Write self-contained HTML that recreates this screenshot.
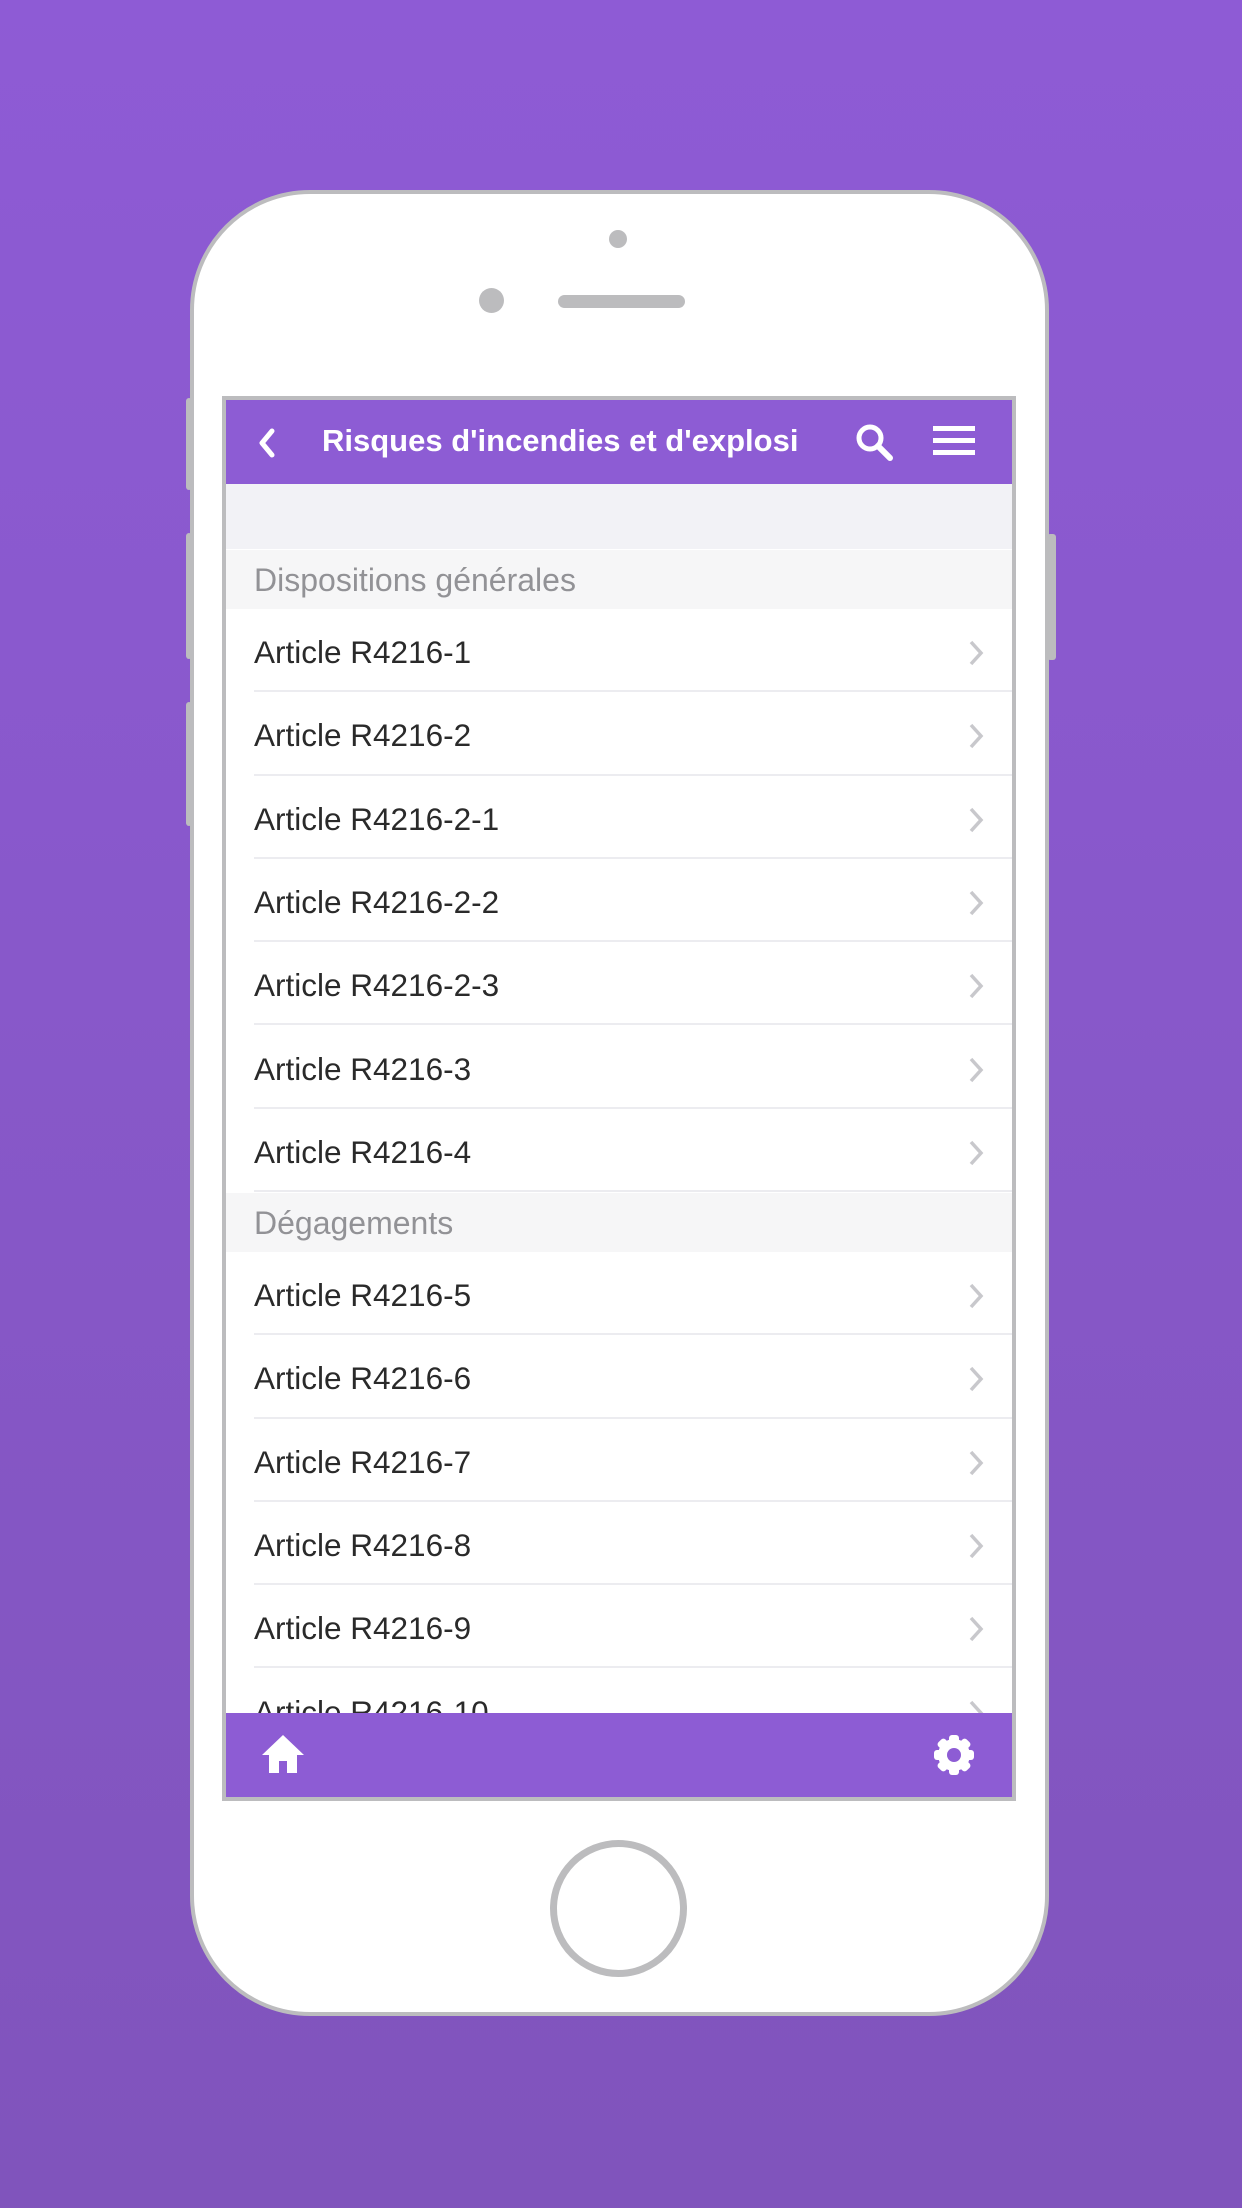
<!DOCTYPE html>
<html><head><meta charset="utf-8"><style>
*{margin:0;padding:0;box-sizing:border-box}
html,body{width:1242px;height:2208px;overflow:hidden}
body{background:linear-gradient(#8e5bd5,#8054bc);position:relative;font-family:"Liberation Sans",Arial,sans-serif}
.abs{position:absolute}
.phone{left:190px;top:190px;width:859px;height:1826px;background:#fff;border:4px solid #bcbcbe;border-radius:120px}
.btn{background:#bcbcbe;border-radius:3px}
.screen{left:222px;top:396px;width:794px;height:1405px;border:4px solid #bcbcbe;background:#fff;overflow:hidden}
.hdr{left:0;top:0;width:786px;height:84px;background:#8d5cd4}
.title{left:96px;top:23px;color:#fff;font-weight:bold;font-size:31px;white-space:nowrap;width:495px;overflow:hidden}
.band{left:0;top:84px;width:786px;height:65px;background:#f2f2f6}
.sec{position:absolute;left:0;width:786px;height:59px;background:#f6f6f7;color:#929296;font-size:32px;padding-left:28px;line-height:61px}
.row{position:absolute;left:0;width:786px;height:83.3px;color:#2a2a2a;font-size:31.5px;padding-left:28px;line-height:86px;background:#fff}
.row::after{content:"";position:absolute;left:28px;right:0;bottom:0;height:2px;background:#ececf0}
.row svg{position:absolute;left:741px;top:31px}
.foot{left:0;top:1313px;width:786px;height:84px;background:#8d5cd4}
</style></head><body>
<div class="abs btn" style="left:186px;top:398px;width:6px;height:92px"></div>
<div class="abs btn" style="left:186px;top:533px;width:6px;height:126px"></div>
<div class="abs btn" style="left:186px;top:702px;width:6px;height:124px"></div>
<div class="abs btn" style="left:1047px;top:534px;width:9px;height:126px"></div>
<div class="abs phone"></div>
<div class="abs" style="left:609px;top:230px;width:18px;height:18px;border-radius:50%;background:#bcbcbe"></div>
<div class="abs" style="left:479px;top:288px;width:25px;height:25px;border-radius:50%;background:#bcbcbe"></div>
<div class="abs" style="left:558px;top:295px;width:127px;height:13px;border-radius:7px;background:#bcbcbe"></div>
<div class="abs" style="left:550px;top:1840px;width:137px;height:137px;border-radius:50%;border:7px solid #bcbcbe"></div>
<div class="abs screen">
 <div class="abs hdr">
  <svg class="abs" style="left:30px;top:28px" width="22" height="30"><path d="M16 3 L6 15 L16 27" stroke="#fff" stroke-width="5" fill="none" stroke-linecap="round" stroke-linejoin="round"/></svg>
  <div class="abs title">Risques d'incendies et d'explosi</div>
  <svg class="abs" style="left:626px;top:20px" width="50" height="50"><circle cx="18" cy="18" r="11" stroke="#fff" stroke-width="5" fill="none"/><path d="M26 26 L38 38" stroke="#fff" stroke-width="6" stroke-linecap="round"/></svg>
  <div class="abs" style="left:707px;top:26px;width:42px;height:5px;background:#fff"></div>
  <div class="abs" style="left:707px;top:38px;width:42px;height:5px;background:#fff"></div>
  <div class="abs" style="left:707px;top:50px;width:42px;height:5px;background:#fff"></div>
 </div>
 <div class="abs band"></div>
 <div class="sec" style="top:150px">Dispositions générales</div>
 <div class="row" style="top:209px">Article R4216-1<svg width="18" height="26"><path d="M4 2 L14 13 L4 24" stroke="#c8c8cc" stroke-width="3.5" fill="none"/></svg></div>
 <div class="row" style="top:292.3px">Article R4216-2<svg width="18" height="26"><path d="M4 2 L14 13 L4 24" stroke="#c8c8cc" stroke-width="3.5" fill="none"/></svg></div>
 <div class="row" style="top:375.6px">Article R4216-2-1<svg width="18" height="26"><path d="M4 2 L14 13 L4 24" stroke="#c8c8cc" stroke-width="3.5" fill="none"/></svg></div>
 <div class="row" style="top:458.9px">Article R4216-2-2<svg width="18" height="26"><path d="M4 2 L14 13 L4 24" stroke="#c8c8cc" stroke-width="3.5" fill="none"/></svg></div>
 <div class="row" style="top:542.2px">Article R4216-2-3<svg width="18" height="26"><path d="M4 2 L14 13 L4 24" stroke="#c8c8cc" stroke-width="3.5" fill="none"/></svg></div>
 <div class="row" style="top:625.5px">Article R4216-3<svg width="18" height="26"><path d="M4 2 L14 13 L4 24" stroke="#c8c8cc" stroke-width="3.5" fill="none"/></svg></div>
 <div class="row" style="top:708.8px">Article R4216-4<svg width="18" height="26"><path d="M4 2 L14 13 L4 24" stroke="#c8c8cc" stroke-width="3.5" fill="none"/></svg></div>
 <div class="sec" style="top:793px">Dégagements</div>
 <div class="row" style="top:852px">Article R4216-5<svg width="18" height="26"><path d="M4 2 L14 13 L4 24" stroke="#c8c8cc" stroke-width="3.5" fill="none"/></svg></div>
 <div class="row" style="top:935.3px">Article R4216-6<svg width="18" height="26"><path d="M4 2 L14 13 L4 24" stroke="#c8c8cc" stroke-width="3.5" fill="none"/></svg></div>
 <div class="row" style="top:1018.6px">Article R4216-7<svg width="18" height="26"><path d="M4 2 L14 13 L4 24" stroke="#c8c8cc" stroke-width="3.5" fill="none"/></svg></div>
 <div class="row" style="top:1101.9px">Article R4216-8<svg width="18" height="26"><path d="M4 2 L14 13 L4 24" stroke="#c8c8cc" stroke-width="3.5" fill="none"/></svg></div>
 <div class="row" style="top:1185.2px">Article R4216-9<svg width="18" height="26"><path d="M4 2 L14 13 L4 24" stroke="#c8c8cc" stroke-width="3.5" fill="none"/></svg></div>
 <div class="row" style="top:1268.5px">Article R4216-10<svg width="18" height="26"><path d="M4 2 L14 13 L4 24" stroke="#c8c8cc" stroke-width="3.5" fill="none"/></svg></div>
 <div class="abs foot">
  <svg class="abs" style="left:34px;top:20px" width="46" height="42"><path d="M23 2 L44 22 L37 22 L37 40 L27 40 L27 28 L19 28 L19 40 L9 40 L9 22 L2 22 Z" fill="#fff"/></svg>
  <svg class="abs" style="left:705px;top:19px" width="46" height="46" viewBox="-23 -23 46 46">
   <g fill="#fff">
    <circle r="16"/>
    <rect x="-5" y="-20" width="10" height="40" rx="3"/>
    <rect x="-5" y="-20" width="10" height="40" rx="3" transform="rotate(45)"/>
    <rect x="-5" y="-20" width="10" height="40" rx="3" transform="rotate(90)"/>
    <rect x="-5" y="-20" width="10" height="40" rx="3" transform="rotate(135)"/>
   </g>
   <circle r="7" fill="#8d5cd4"/>
  </svg>
 </div>
</div>
</body></html>
